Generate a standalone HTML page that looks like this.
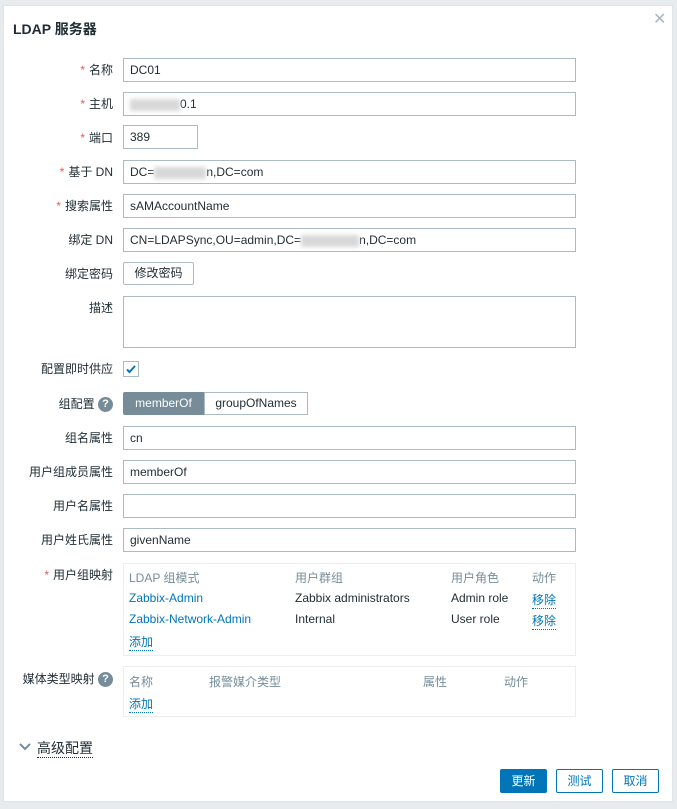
<!DOCTYPE html>
<html><head><meta charset="utf-8"><style>
body{margin:0;width:677px;height:809px;background:#e8ebed;font-family:"Liberation Sans","Noto Sans CJK SC",sans-serif;font-size:12px;color:#1f2c33;position:relative;overflow:hidden}
.dlg{position:absolute;left:3px;top:5px;width:668px;height:795px;background:#fff;border:1px solid #dfe4e7}
.a{position:absolute}
.lbl{position:absolute;right:564px;text-align:right;white-space:nowrap;line-height:14px}
.req{color:#e45959;margin-right:4px}
.in{position:absolute;left:123px;width:453px;height:24px;border:1px solid #acbbc2;box-sizing:border-box;padding-left:6px;line-height:23px;white-space:nowrap}
.blur{display:inline-block;background:#d8d8d8;filter:blur(2px);height:12px;vertical-align:middle}
.q{display:inline-block;width:15px;height:15px;border-radius:50%;background:#768d99;color:#fff;font-weight:bold;text-align:center;line-height:15px;font-size:11px;vertical-align:middle}
.box{position:absolute;left:123px;width:453px;border:1px solid #ebeef0;box-sizing:border-box}
.hd{color:#768d99}
.lk{color:#0275b8}
.dl{color:#0275b8;border-bottom:1px dotted #0275b8}
.btn{position:absolute;top:769px;height:24px;width:47px;box-sizing:border-box;border:1px solid #0275b8;color:#0275b8;text-align:center;line-height:22px;border-radius:2px}
</style></head><body>
<div class="dlg"></div>
<div class="a" style="left:13px;top:19px;font-size:14px;font-weight:bold;color:#1f2c33">LDAP 服务器</div>
<div class="a" style="left:653px;top:9px;font-size:16px;color:#a9b6bd">✕</div>

<div class="lbl" style="top:63px"><span class="req">*</span>名称</div>
<div class="in" style="top:58px">DC01</div>
<div class="lbl" style="top:97px"><span class="req">*</span>主机</div>
<div class="in" style="top:92px"><span class="blur" style="width:50px"></span>0.1</div>
<div class="lbl" style="top:131px"><span class="req">*</span>端口</div>
<div class="in" style="top:125px;width:75px">389</div>
<div class="lbl" style="top:165px"><span class="req">*</span>基于 DN</div>
<div class="in" style="top:160px">DC=<span class="blur" style="width:52px"></span>n,DC=com</div>
<div class="lbl" style="top:199px"><span class="req">*</span>搜索属性</div>
<div class="in" style="top:194px">sAMAccountName</div>
<div class="lbl" style="top:233px">绑定 DN</div>
<div class="in" style="top:228px">CN=LDAPSync,OU=admin,DC=<span class="blur" style="width:58px"></span>n,DC=com</div>
<div class="lbl" style="top:267px">绑定密码</div>
<div class="a" style="left:123px;top:262px;width:71px;height:23px;border:1px solid #acbbc2;box-sizing:border-box;text-align:center;line-height:21px;border-radius:2px">修改密码</div>
<div class="lbl" style="top:301px">描述</div>
<div class="in" style="top:296px;height:52px"></div>
<div class="lbl" style="top:362px">配置即时供应</div>
<div class="a" style="left:123px;top:361px;width:16px;height:16px;border:1px solid #acbbc2;box-sizing:border-box"><svg width="14" height="14" viewBox="0 0 14 14"><path d="M3 7.5l2.5 2.5 5.5-6" fill="none" stroke="#0275b8" stroke-width="2"/></svg></div>
<div class="lbl" style="top:397px">组配置 <span class="q">?</span></div>
<div class="a" style="left:123px;top:392px;width:81px;height:23px;background:#768d99;color:#fff;text-align:center;line-height:23px;border-radius:2px 0 0 2px">memberOf</div>
<div class="a" style="left:204px;top:392px;width:104px;height:23px;border:1px solid #acbbc2;box-sizing:border-box;text-align:center;line-height:21px">groupOfNames</div>
<div class="lbl" style="top:431px">组名属性</div>
<div class="in" style="top:426px">cn</div>
<div class="lbl" style="top:465px">用户组成员属性</div>
<div class="in" style="top:460px">memberOf</div>
<div class="lbl" style="top:499px">用户名属性</div>
<div class="in" style="top:494px"></div>
<div class="lbl" style="top:533px">用户姓氏属性</div>
<div class="in" style="top:528px">givenName</div>

<div class="lbl" style="top:568px"><span class="req">*</span>用户组映射</div>
<div class="box" style="top:563px;height:93px"></div>
<div class="a hd" style="left:129px;top:569px">LDAP 组模式</div>
<div class="a hd" style="left:295px;top:569px">用户群组</div>
<div class="a hd" style="left:451px;top:569px">用户角色</div>
<div class="a hd" style="left:532px;top:569px">动作</div>
<div class="a lk" style="left:129px;top:591px">Zabbix-Admin</div>
<div class="a" style="left:295px;top:591px">Zabbix administrators</div>
<div class="a" style="left:451px;top:591px">Admin role</div>
<div class="a dl" style="left:532px;top:591px">移除</div>
<div class="a lk" style="left:129px;top:612px">Zabbix-Network-Admin</div>
<div class="a" style="left:295px;top:612px">Internal</div>
<div class="a" style="left:451px;top:612px">User role</div>
<div class="a dl" style="left:532px;top:612px">移除</div>
<div class="a dl" style="left:129px;top:633px">添加</div>

<div class="lbl" style="top:672px">媒体类型映射 <span class="q">?</span></div>
<div class="box" style="top:666px;height:51px"></div>
<div class="a hd" style="left:129px;top:673px">名称</div>
<div class="a hd" style="left:209px;top:673px">报警媒介类型</div>
<div class="a hd" style="left:423px;top:673px">属性</div>
<div class="a hd" style="left:504px;top:673px">动作</div>
<div class="a dl" style="left:129px;top:695px">添加</div>

<svg class="a" style="left:18px;top:742px" width="14" height="10" viewBox="0 0 14 10"><path d="M2 2l5 5 5-5" fill="none" stroke="#768d99" stroke-width="2"/></svg>
<div class="a" style="left:37px;top:740px;font-size:14px;border-bottom:1px dotted #1f2c33;line-height:17px">高级配置</div>

<div class="btn" style="left:500px;background:#0275b8;color:#fff">更新</div>
<div class="btn" style="left:556px">测试</div>
<div class="btn" style="left:612px">取消</div>
</body></html>
